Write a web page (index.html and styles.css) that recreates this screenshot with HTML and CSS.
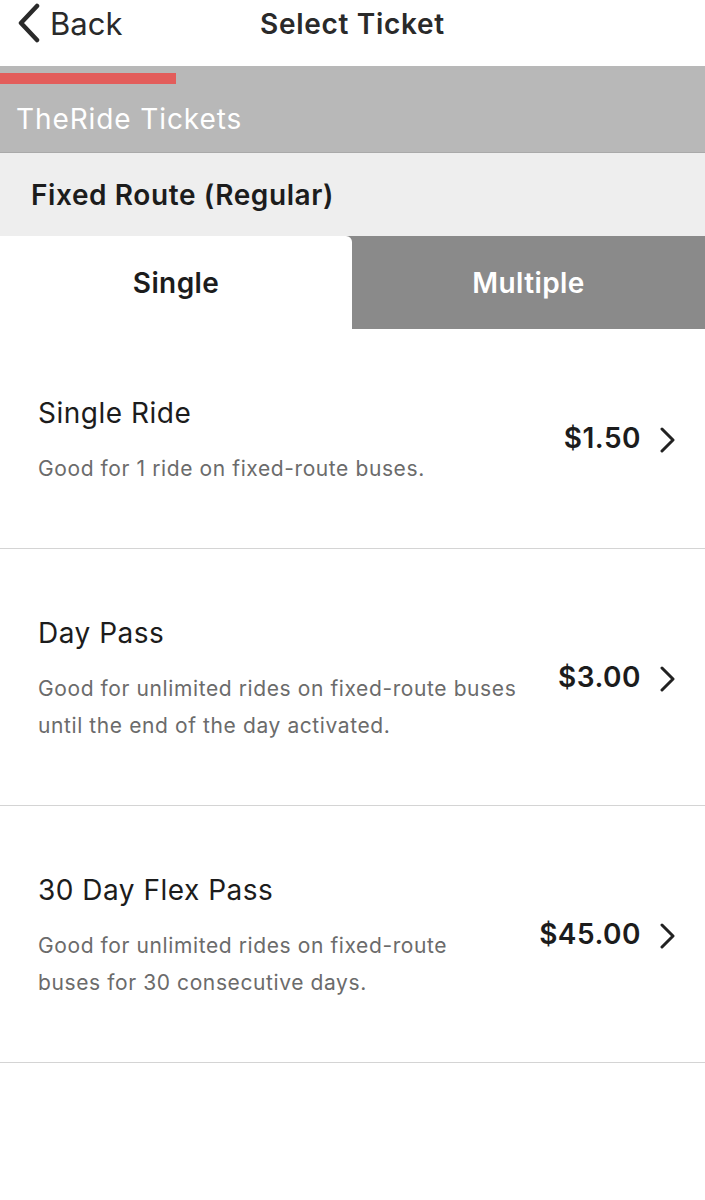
FILE: index.html
```html
<!DOCTYPE html>
<html>
<head>
<meta charset="utf-8">
<link rel="stylesheet" href="styles.css">
</head>
<body>
<header class="nav">
  <div class="back">
    <svg class="back-icon" width="26" height="40" viewBox="0 0 26 40"><path d="M21 3 L5 20 L21 37" fill="none" stroke="#2a2a2a" stroke-width="4.5" stroke-linecap="round" stroke-linejoin="round"/></svg>
    <span>Back</span>
  </div>
  <div class="nav-title">Select Ticket</div>
</header>
<section class="agency">
  <div class="progress"></div>
  <div class="agency-name">TheRide Tickets</div>
</section>
<section class="category">Fixed Route (Regular)</section>
<nav class="tabs">
  <div class="tab active">Single</div>
  <div class="tab">Multiple</div>
</nav>
<ul class="list">
  <li class="item">
    <div class="info">
      <div class="title">Single Ride</div>
      <div class="desc">Good for 1 ride on fixed-route buses.</div>
    </div>
    <div class="price">$1.50</div>
    <svg class="chev" width="18" height="26" viewBox="0 0 18 26"><path d="M4 2 L15 13 L4 24" fill="none" stroke="#222" stroke-width="3" stroke-linecap="round" stroke-linejoin="round"/></svg>
  </li>
  <li class="item">
    <div class="info">
      <div class="title">Day Pass</div>
      <div class="desc">Good for unlimited rides on fixed-route buses until the end of the day activated.</div>
    </div>
    <div class="price">$3.00</div>
    <svg class="chev" width="18" height="26" viewBox="0 0 18 26"><path d="M4 2 L15 13 L4 24" fill="none" stroke="#222" stroke-width="3" stroke-linecap="round" stroke-linejoin="round"/></svg>
  </li>
  <li class="item">
    <div class="info">
      <div class="title">30 Day Flex Pass</div>
      <div class="desc narrow">Good for unlimited rides on fixed-route buses for 30 consecutive days.</div>
    </div>
    <div class="price">$45.00</div>
    <svg class="chev" width="18" height="26" viewBox="0 0 18 26"><path d="M4 2 L15 13 L4 24" fill="none" stroke="#222" stroke-width="3" stroke-linecap="round" stroke-linejoin="round"/></svg>
  </li>
</ul>
</body>
</html>
```
FILE: styles.css
```css
* { box-sizing: border-box; }
html, body { margin: 0; padding: 0; background: #fff; }
body { font-family: Inter, "Noto Sans", sans-serif; color: #1c1c1c; width: 705px; }

.nav {
  height: 66px;
  display: flex;
  align-items: center;
  position: relative;
  padding-left: 16px;
}
.back {
  display: flex;
  align-items: center;
  gap: 8px;
  font-size: 31px;
  color: #2a2a2a;
  margin-top: -20px;
}
.back-icon { display: block; }
.nav-title {
  position: absolute;
  left: 0; right: 0;
  top: 7px;
  text-align: center;
  font-size: 28px;
  letter-spacing: 0.7px;
  font-weight: 600;
  color: #2a2a2a;
  pointer-events: none;
}

.agency {
  background: #b8b8b8;
  height: 87px;
  padding-top: 7px;
  border-bottom: 1px solid #a9a9a9;
}
.progress { width: 176px; height: 11px; background: #e35d5b; }
.agency-name {
  color: #fff;
  font-size: 28px;
  letter-spacing: 0.9px;
  padding-left: 16px;
  margin-top: 17px;
  line-height: 36px;
}

.category {
  background: #eeeeee;
  height: 83px;
  display: flex;
  align-items: center;
  padding-left: 31px;
  font-size: 28px;
  letter-spacing: 0.6px;
  font-weight: 600;
  color: #1c1c1c;
}

.tabs { display: flex; height: 93px; background: #8a8a8a; }
.tab {
  flex: 1;
  display: flex;
  align-items: center;
  justify-content: center;
  font-size: 28px;
  letter-spacing: 0.4px;
  font-weight: 600;
  color: #fff;
}
.tab.active {
  background: #fff;
  color: #1c1c1c;
  border-top-right-radius: 6px;
  flex: 0 0 352px;
}

.list { list-style: none; margin: 0; padding: 0; }
.item {
  display: flex;
  align-items: center;
  padding: 66px 29px 61px 38px;
  border-bottom: 1px solid #d4d4d4;
}
.info { flex: 1; }
.title { font-size: 28px; letter-spacing: 0.5px; line-height: 36px; color: #1c1c1c; }
.desc {
  margin-top: 19px;
  font-size: 21px;
  letter-spacing: 0.6px;
  line-height: 37px;
  color: #6b6b6b;
  max-width: 495px;
}
.desc.narrow { max-width: 430px; }
.price {
  font-size: 28px;
  letter-spacing: 0.5px;
  font-weight: 600;
  color: #1c1c1c;
  margin-left: 16px;
  margin-top: -6px;
}
.chev { margin-left: 17px; display: block; margin-top: -2px; }
```
